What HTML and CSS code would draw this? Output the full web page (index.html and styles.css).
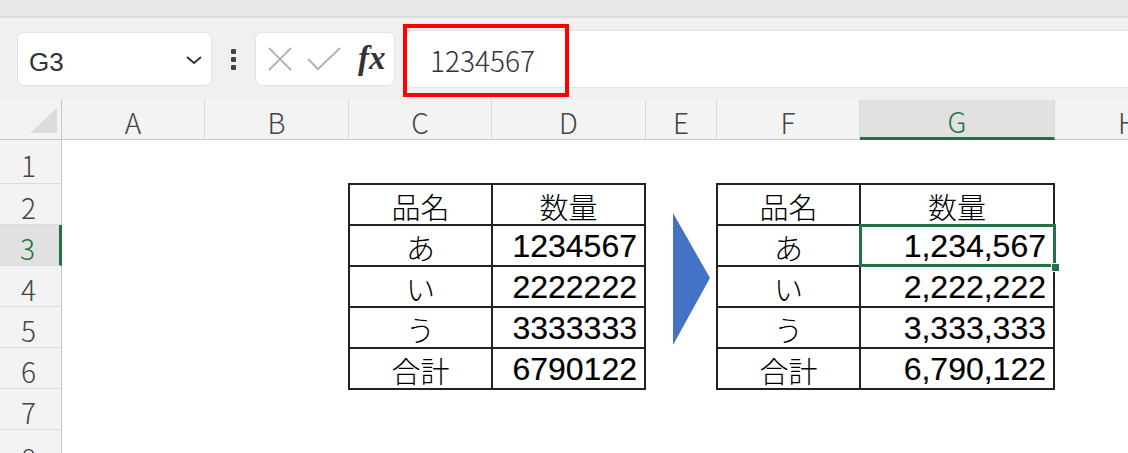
FILE: index.html
```html
<!DOCTYPE html>
<html lang="ja">
<head>
    <meta charset="UTF-8">
    <meta name="viewport" content="width=device-width, initial-scale=1.0">
    <title>Excel - カンマ区切り</title>
    <link rel="stylesheet" href="styles.css">
</head>
<body>
    <div class="ribbon-edge"></div>

    <div class="formula-bar">
        <div class="name-box">
            <span>G3</span>
            <svg class="chevron" width="18" height="10" viewBox="0 0 18 10">
                <path d="M2 2 L9 8 L16 2" fill="none" stroke="#333" stroke-width="2"/>
            </svg>
        </div>
        <div class="grip">
            <span></span><span></span><span></span>
        </div>
        <div class="fx-box">
            <svg width="26" height="26" viewBox="0 0 26 26">
                <path d="M2 2 L24 24 M24 2 L2 24" stroke="#b4b4b4" stroke-width="2" fill="none"/>
            </svg>
            <svg width="34" height="24" viewBox="0 0 34 24">
                <path d="M1 12 L11 22 L33 1" stroke="#b4b4b4" stroke-width="2" fill="none"/>
            </svg>
            <span class="fx">fx</span>
        </div>
        <div class="formula-input">1234567</div>
        <div class="highlight"></div>
    </div>

    <div class="sheet">
        <div class="corner"><div class="corner-tri"></div></div>
        <div class="col-head">A</div>
        <div class="col-head">B</div>
        <div class="col-head">C</div>
        <div class="col-head">D</div>
        <div class="col-head">E</div>
        <div class="col-head">F</div>
        <div class="col-head active">G</div>
        <div class="col-head last">H</div>

        <div class="row-head r1">1</div>
        <div class="row-head r2">2</div>
        <div class="row-head r3 active">3</div>
        <div class="row-head r4">4</div>
        <div class="row-head r5">5</div>
        <div class="row-head r6">6</div>
        <div class="row-head r7">7</div>
        <div class="row-head r8">8</div>

        <table class="data before">
            <tr><td class="name">品名</td><td class="name">数量</td></tr>
            <tr><td class="name">あ</td><td class="num">1234567</td></tr>
            <tr><td class="name">い</td><td class="num">2222222</td></tr>
            <tr><td class="name">う</td><td class="num">3333333</td></tr>
            <tr><td class="name">合計</td><td class="num">6790122</td></tr>
        </table>

        <div class="arrow">
            <svg width="71" height="205" viewBox="0 0 71 205">
                <polygon points="27,29 64,94 27,161" fill="#4472c4"/>
            </svg>
        </div>

        <table class="data after">
            <tr><td class="name">品名</td><td class="name">数量</td></tr>
            <tr><td class="name">あ</td><td class="num selected">1,234,567</td></tr>
            <tr><td class="name">い</td><td class="num">2,222,222</td></tr>
            <tr><td class="name">う</td><td class="num">3,333,333</td></tr>
            <tr><td class="name">合計</td><td class="num">6,790,122</td></tr>
        </table>
    </div>
</body>
</html>
```

FILE: styles.css
```css
body {
    margin: 0;
    padding: 0;
    width: 1128px;
    height: 453px;
    overflow: hidden;
    background: #fff;
    font-family: "Noto Sans CJK JP", "Noto Sans", sans-serif;
}

.ribbon-edge {
    height: 16px;
    background: #e8e8e8;
    border-bottom: 2px solid #dadada;
}

/* Formula bar */
.formula-bar {
    position: relative;
    height: 82px;
    background: #f0f0f0;
    display: flex;
    align-items: center;
    padding-left: 17px;
}

.name-box {
    width: 195px;
    height: 54px;
    box-sizing: border-box;
    background: #fff;
    border: 1px solid #e2e2e2;
    border-radius: 7px;
    display: flex;
    align-items: center;
    justify-content: space-between;
    padding: 6px 8px 0 11px;
    font-family: "Liberation Sans", sans-serif;
    font-size: 26px;
    color: #333;
}

.chevron {
    margin-top: -4px;
}

.grip {
    width: 43px;
    display: flex;
    flex-direction: column;
    align-items: center;
    gap: 3px;
}

.grip span {
    width: 5px;
    height: 5px;
    border-radius: 1px;
    background: #444;
}

.fx-box {
    width: 140px;
    height: 54px;
    box-sizing: border-box;
    background: #fff;
    border: 1px solid #e2e2e2;
    border-radius: 7px;
    display: flex;
    align-items: center;
    padding-left: 11px;
    gap: 14px;
}

.fx {
    font-family: "Liberation Serif", serif;
    font-style: italic;
    font-weight: bold;
    font-size: 33px;
    color: #333;
    margin-left: 3px;
    margin-top: -2px;
}

.formula-input {
    flex: 1;
    height: 54px;
    margin-left: 11px;
    background: #fff;
    border: 1px solid #e2e2e2;
    border-right: none;
    border-radius: 7px 0 0 7px;
    display: flex;
    align-items: center;
    padding: 2px 0 0 23px;
    font-size: 28px;
    font-weight: 300;
    color: #333;
}

.highlight {
    position: absolute;
    left: 403px;
    top: 6px;
    width: 166px;
    height: 73px;
    box-sizing: border-box;
    border: 4px solid #f00;
}

/* Sheet grid */
.sheet {
    display: grid;
    grid-template-columns: 62px 143px 144px 143px 154px 71px 143px 195px 1fr;
    grid-template-rows: 40px 44px repeat(7, 41px);
}

.corner {
    background: #f3f3f3;
    border-right: 1px solid #c6c6c6;
    border-bottom: 1px solid #c6c6c6;
    position: relative;
}

.corner-tri {
    position: absolute;
    left: 30px;
    top: 8px;
    width: 27px;
    height: 25px;
    background: #dcdcdc;
    clip-path: polygon(100% 0, 100% 100%, 0 100%);
}

.col-head {
    background: #f3f3f3;
    border-right: 1px solid #d8d8d8;
    border-bottom: 1px solid #c6c6c6;
    display: flex;
    justify-content: center;
    align-items: center;
    padding-top: 4px;
    font-size: 28px;
    font-weight: 300;
    color: #444;
}

.col-head.active {
    background: #e1e1e1;
    color: #217346;
    border-bottom: 3px solid #217346;
}

.col-head.last {
    justify-content: flex-end;
    margin-right: -10px;
    border-right: none;
}

.row-head {
    grid-column: 1;
    background: #f3f3f3;
    border-right: 1px solid #c6c6c6;
    border-bottom: 1px solid #dcdcdc;
    display: flex;
    justify-content: center;
    align-items: center;
    padding: 6px 4px 0 0;
    font-size: 28px;
    font-weight: 300;
    color: #444;
}

.row-head.r1 { grid-row: 2; }
.row-head.r2 { grid-row: 3; }
.row-head.r3 { grid-row: 4; }
.row-head.r4 { grid-row: 5; }
.row-head.r5 { grid-row: 6; }
.row-head.r6 { grid-row: 7; }
.row-head.r7 { grid-row: 8; }
.row-head.r8 { grid-row: 9; align-items: flex-start; padding-top: 8px; }

.row-head.active {
    background: #e1e1e1;
    color: #217346;
    border-right: 3px solid #217346;
}

/* Tables */
.data {
    grid-row: 3 / 8;
    border-collapse: collapse;
    margin: -1px 0 0 -1px;
    width: calc(100% + 1px);
    height: 206px;
}

.data.before { grid-column: 4 / 6; }
.data.after { grid-column: 7 / 9; }

.data td {
    border: 2px solid #222;
    padding: 0;
    height: 41px;
    line-height: 30px;
    box-sizing: border-box;
    color: #000;
}

.data td:first-child { width: 143px; }

.data td.name {
    text-align: center;
    font-size: 29px;
    font-weight: 300;
    padding-top: 3px;
}

.data td.num {
    text-align: right;
    font-family: "Liberation Sans", sans-serif;
    font-size: 32px;
    padding-right: 7px;
    -webkit-text-stroke: 0.2px #000;
}

.data td.selected {
    position: relative;
}

.data td.selected::after {
    content: "";
    position: absolute;
    left: -2px;
    top: -2px;
    right: -3px;
    bottom: -2px;
    border: 3px solid #217346;
}

.data td.selected::before {
    content: "";
    position: absolute;
    right: -7px;
    bottom: -7px;
    width: 7px;
    height: 7px;
    background: #217346;
    border: 1px solid #fff;
    z-index: 1;
}

.arrow {
    grid-column: 6;
    grid-row: 3 / 8;
}

.arrow svg {
    display: block;
}
```
